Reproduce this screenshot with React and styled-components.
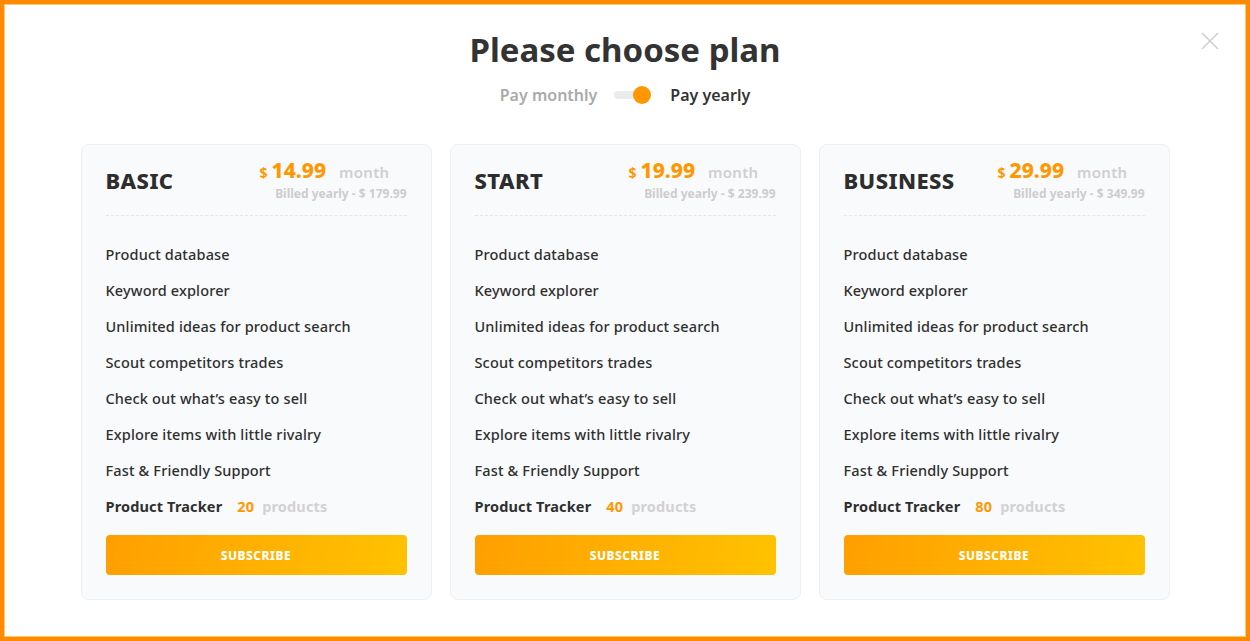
import styled, { createGlobalStyle } from "styled-components";

const GlobalStyle = createGlobalStyle`
  html, body {
    margin: 0;
    padding: 0;
    background: #fff;
    font-family: "Noto Sans", "Open Sans", sans-serif;
    color: #333;
  }
`;

const Frame = styled.div`
  position: relative;
  box-sizing: border-box;
  width: 1250px;
  height: 641px;
  border: 4px solid #ff8a00;
  box-shadow: inset 0 0 0 1px #ffc872;
  background: #fff;
  display: flex;
  flex-direction: column;
  align-items: center;
`;

const Close = styled.button`
  position: absolute;
  top: 25px;
  right: 24px;
  width: 24px;
  height: 24px;
  padding: 0;
  border: 0;
  background: none;
  cursor: pointer;
`;

const Title = styled.h1`
  margin: 26px 0 0;
  font-size: 33px;
  line-height: 40px;
  font-weight: 700;
  color: #333;
`;

const Toggle = styled.div`
  display: flex;
  align-items: center;
  margin-top: 12px;
  height: 26px;
`;

const ToggleLabel = styled.span`
  font-size: 16px;
  font-weight: 600;
  color: ${(p) => (p.$active ? "#333" : "#aaa")};
`;

const Track = styled.div`
  position: relative;
  width: 34px;
  height: 8px;
  margin: 0 22px 0 17px;
  border-radius: 4px;
  background: #ebebeb;
`;

const Knob = styled.span`
  position: absolute;
  right: -3px;
  top: -5px;
  width: 18px;
  height: 18px;
  border-radius: 50%;
  background: #ff9800;
`;

const Cards = styled.div`
  display: flex;
  gap: 18px;
  margin-top: 36px;
`;

const Card = styled.div`
  box-sizing: border-box;
  width: 351px;
  height: 456px;
  padding: 12px 24px 24px;
  background: #f9fafc;
  border: 1px solid #edeff2;
  border-radius: 8px;
  display: flex;
  flex-direction: column;
`;

const Head = styled.div`
  box-sizing: border-box;
  flex-shrink: 0;
  display: flex;
  justify-content: space-between;
  align-items: center;
  height: 59px;
  padding-bottom: 12px;
  border-bottom: 1px dashed #e6e7ea;
`;

const Name = styled.h2`
  margin: 0;
  font-size: 22px;
  font-weight: 800;
  letter-spacing: 0.4px;
  color: #2d2d2d;
`;

const Price = styled.div`
  display: flex;
  flex-direction: column;
  align-items: flex-end;
`;

const PriceRow = styled.div`
  display: flex;
  align-items: baseline;
  line-height: 22px;
`;

const Currency = styled.span`
  font-size: 14px;
  font-weight: 700;
  color: #ff9800;
  margin-right: 4px;
`;

const Amount = styled.span`
  font-size: 21px;
  font-weight: 800;
  color: #ff9800;
`;

const Period = styled.span`
  font-size: 15px;
  font-weight: 600;
  letter-spacing: 0.3px;
  color: #cfcfcf;
  margin-left: 13px;
  padding-right: 17px;
`;

const Billed = styled.div`
  font-size: 12px;
  line-height: 15px;
  margin-top: 2px;
  font-weight: 700;
  color: #cdcdcd;
`;

const Features = styled.ul`
  flex-shrink: 0;
  list-style: none;
  margin: 20px 0 0;
  padding: 0;
`;

const Feature = styled.li`
  font-size: 14.5px;
  letter-spacing: 0.15px;
  line-height: 36px;
  font-weight: 500;
  color: #2f2f2f;
`;

const Tracker = styled.span`
  font-weight: 700;
`;

const Count = styled.span`
  font-weight: 700;
  color: #ff9800;
  margin-left: 15px;
`;

const Unit = styled.span`
  font-weight: 700;
  color: #d2d2d2;
  margin-left: 8px;
`;

const Subscribe = styled.button`
  flex-shrink: 0;
  margin-top: 11px;
  height: 40px;
  border: 0;
  border-radius: 4px;
  background: linear-gradient(100deg, #ff9f00 0%, #ffc200 100%);
  color: #fff;
  font-family: inherit;
  font-size: 12px;
  font-weight: 800;
  letter-spacing: 0.5px;
  cursor: pointer;
`;

const features = [
  "Product database",
  "Keyword explorer",
  "Unlimited ideas for product search",
  "Scout competitors trades",
  "Check out what’s easy to sell",
  "Explore items with little rivalry",
  "Fast & Friendly Support",
];

const plans = [
  { name: "BASIC", price: "14.99", yearly: "179.99", count: 20 },
  { name: "START", price: "19.99", yearly: "239.99", count: 40 },
  { name: "BUSINESS", price: "29.99", yearly: "349.99", count: 80 },
];

export default function App() {
  return (
    <>
      <GlobalStyle />
      <Frame>
        <Close aria-label="Close">
          <svg width="24" height="24" viewBox="0 0 24 24">
            <path d="M4 4L20 20M20 4L4 20" stroke="#cfcfcf" strokeWidth="1.6" />
          </svg>
        </Close>
        <Title>Please choose plan</Title>
        <Toggle>
          <ToggleLabel>Pay monthly</ToggleLabel>
          <Track>
            <Knob />
          </Track>
          <ToggleLabel $active>Pay yearly</ToggleLabel>
        </Toggle>
        <Cards>
          {plans.map((plan) => (
            <Card key={plan.name}>
              <Head>
                <Name>{plan.name}</Name>
                <Price>
                  <PriceRow>
                    <Currency>$</Currency>
                    <Amount>{plan.price}</Amount>
                    <Period>month</Period>
                  </PriceRow>
                  <Billed>Billed yearly - $ {plan.yearly}</Billed>
                </Price>
              </Head>
              <Features>
                {features.map((f) => (
                  <Feature key={f}>{f}</Feature>
                ))}
                <Feature>
                  <Tracker>Product Tracker</Tracker>
                  <Count>{plan.count}</Count>
                  <Unit>products</Unit>
                </Feature>
              </Features>
              <Subscribe>SUBSCRIBE</Subscribe>
            </Card>
          ))}
        </Cards>
      </Frame>
    </>
  );
}
